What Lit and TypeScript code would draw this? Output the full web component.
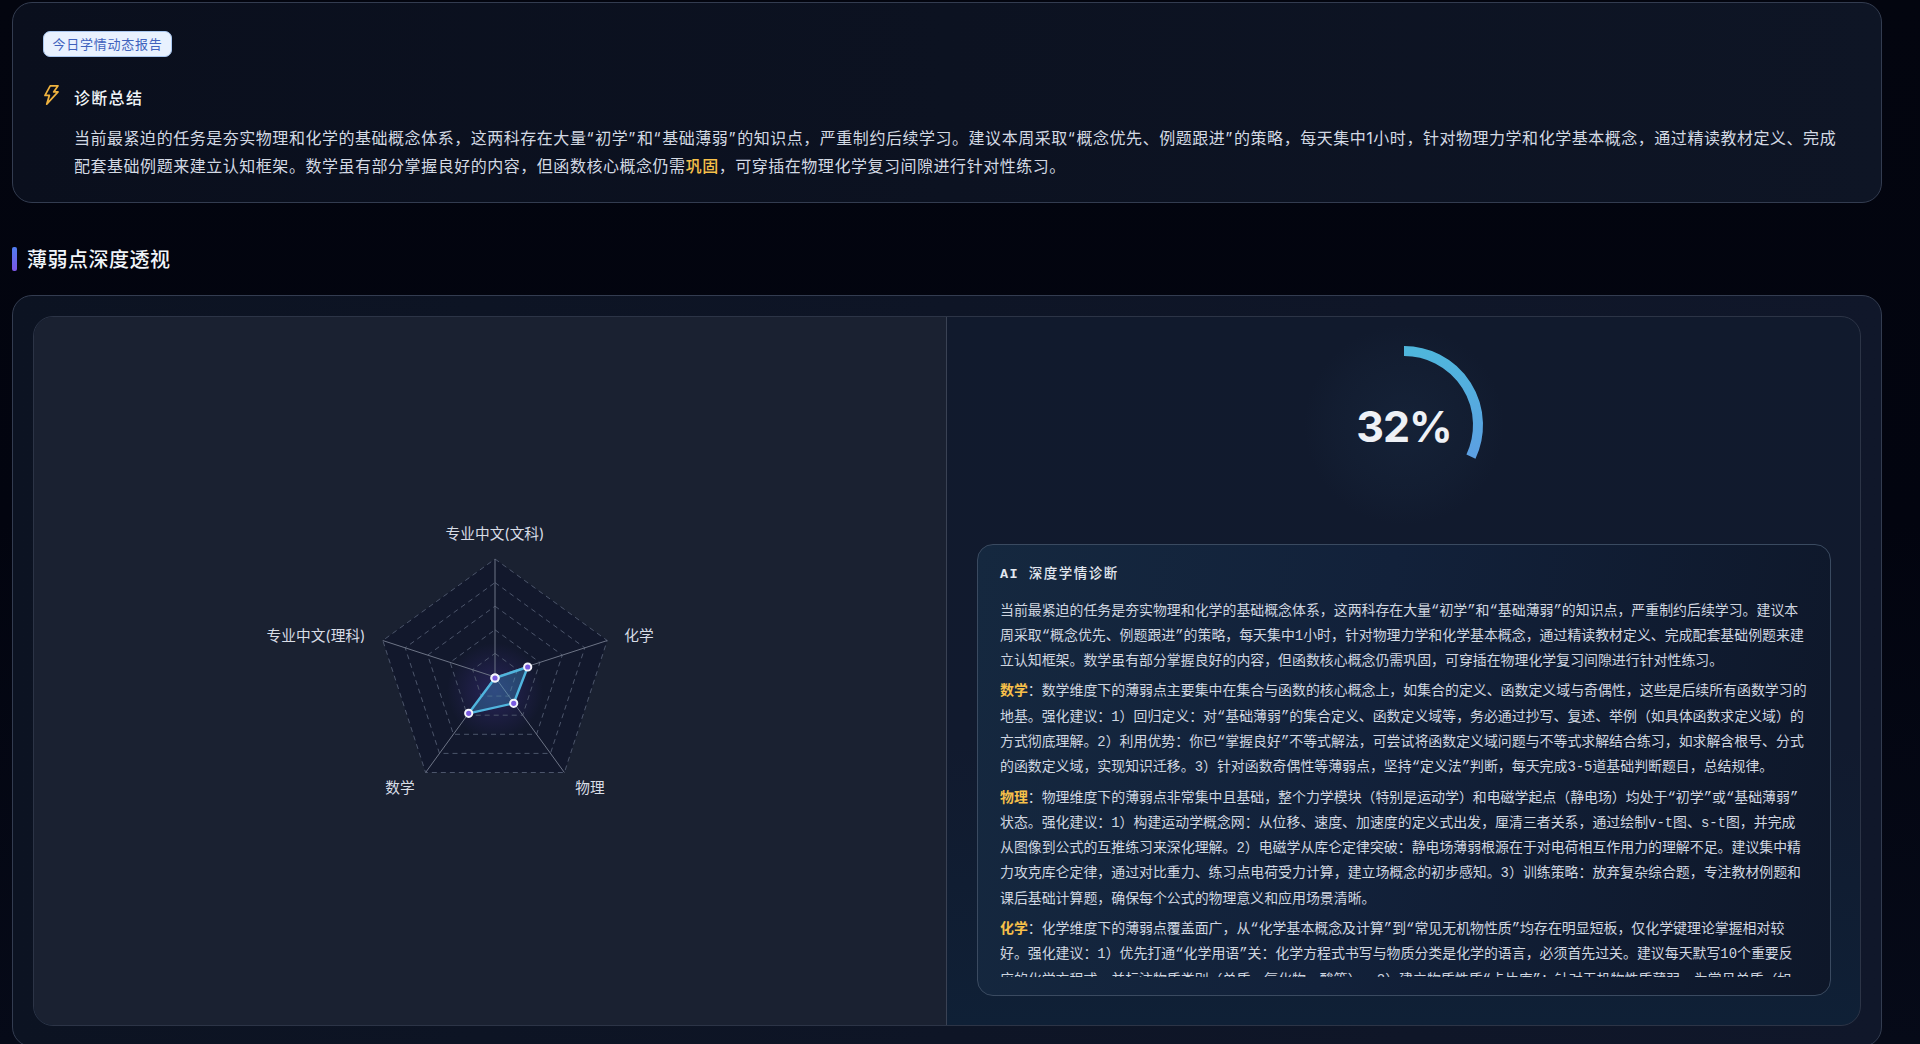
import { LitElement, html, css, svg } from "lit";
import { customElement } from "lit/decorators.js";

const SANS = `Inter, "Noto Sans CJK SC", sans-serif`;
const CX = 495;
const CY = 677;
const R = 118;
const vertex = (i: number, r: number) => {
  const a = (-90 + i * 72) * (Math.PI / 180);
  return [CX + r * Math.cos(a), CY + r * Math.sin(a)];
};
const ring = (r: number) =>
  [0, 1, 2, 3, 4].map((i) => vertex(i, r).map((n) => n.toFixed(1)).join(",")).join(" ");
const dataPts = [
  [495, 678],
  [527.7, 667],
  [513.7, 703.3],
  [468.7, 713.3],
  [495, 678],
];
const labels = [
  { t: "专业中文(文科)", x: 495, y: 534 },
  { t: "化学", x: 639, y: 636 },
  { t: "物理", x: 590, y: 788 },
  { t: "数学", x: 400, y: 788 },
  { t: "专业中文(理科)", x: 316, y: 636 },
];

const paragraphs = [
  {
    h: "",
    t: `当前最紧迫的任务是夯实物理和化学的基础概念体系，这两科存在大量“初学”和“基础薄弱”的知识点，严重制约后续学习。建议本周采取“概念优先、例题跟进”的策略，每天集中1小时，针对物理力学和化学基本概念，通过精读教材定义、完成配套基础例题来建立认知框架。数学虽有部分掌握良好的内容，但函数核心概念仍需巩固，可穿插在物理化学复习间隙进行针对性练习。`,
  },
  {
    h: "数学",
    t: `：数学维度下的薄弱点主要集中在集合与函数的核心概念上，如集合的定义、函数定义域与奇偶性，这些是后续所有函数学习的地基。强化建议：1）回归定义：对“基础薄弱”的集合定义、函数定义域等，务必通过抄写、复述、举例（如具体函数求定义域）的方式彻底理解。2）利用优势：你已“掌握良好”不等式解法，可尝试将函数定义域问题与不等式求解结合练习，如求解含根号、分式的函数定义域，实现知识迁移。3）针对函数奇偶性等薄弱点，坚持“定义法”判断，每天完成3-5道基础判断题目，总结规律。`,
  },
  {
    h: "物理",
    t: `：物理维度下的薄弱点非常集中且基础，整个力学模块（特别是运动学）和电磁学起点（静电场）均处于“初学”或“基础薄弱”\n状态。强化建议：1）构建运动学概念网：从位移、速度、加速度的定义式出发，厘清三者关系，通过绘制v-t图、s-t图，并完成从图像到公式的互推练习来深化理解。2）电磁学从库仑定律突破：静电场薄弱根源在于对电荷相互作用力的理解不足。建议集中精力攻克库仑定律，通过对比重力、练习点电荷受力计算，建立场概念的初步感知。3）训练策略：放弃复杂综合题，专注教材例题和课后基础计算题，确保每个公式的物理意义和应用场景清晰。`,
  },
  {
    h: "化学",
    t: `：化学维度下的薄弱点覆盖面广，从“化学基本概念及计算”到“常见无机物性质”均存在明显短板，仅化学键理论掌握相对较好。强化建议：1）优先打通“化学用语”关：化学方程式书写与物质分类是化学的语言，必须首先过关。建议每天默写10个重要反\n应的化学方程式，并标注物质类别（单质、氧化物、酸等）。 2）建立物质性质“卡片库”：针对无机物性质薄弱，为常见单质（如钠、铁、氯）建立性质卡片，每天复习，逐步形成知识网络。`,
  },
];

const quoted = (s: string) =>
  s.split(/([“”])/).map((part) =>
    part === "“" || part === "”" ? html`<span class="q">${part}</span>` : part
  );

@customElement("app-root")
export class AppRoot extends LitElement {
  static styles = css`
    :host {
      display: block;
      height: 1044px;
      overflow: hidden;
      box-sizing: border-box;
      padding: 2px 38px 0 12px;
      background: linear-gradient(180deg, #03050f 0%, #02040f 50%, #060a18 100%);
      font-family: Inter, "Noto Sans CJK SC", sans-serif;
      color: #e2e8f0;
    }
    .card {
      border: 1px solid #333c50;
      border-radius: 20px;
      background: linear-gradient(90deg, #0a0f1d 0%, #0e1525 100%);
    }
    .summary {
      box-sizing: border-box;
      height: 201px;
      padding: 28px 30px 0;
    }
    .badge {
      display: inline-flex;
      align-items: center;
      box-sizing: border-box;
      height: 26px;
      padding: 0 8.5px 2px;
      border: 1px solid #a9c7f0;
      border-radius: 7px;
      background: #e8f1fe;
      color: #3f62bd;
      font-size: 13px;
      letter-spacing: 0.75px;
      white-space: nowrap;
    }
    .title-row {
      display: flex;
      align-items: center;
      gap: 15px;
      margin-top: 26px;
      height: 28px;
    }
    .title-row svg {
      flex: none;
      margin-left: 1px;
      margin-top: -5px;
    }
    .title-row span {
      font-size: 16px;
      font-weight: 500;
      letter-spacing: 1.3px;
      color: #f1f5f9;
    }
    .summary p {
      margin: 13px 0 0 31px;
      font-size: 16px;
      line-height: 28px;
      letter-spacing: 0.53px;
      color: #d3d9e3;
      white-space: nowrap;
    }
    .q {
      letter-spacing: 1.7px;
    }
    .gold {
      color: #f7c04a;
      font-weight: 500;
    }
    .heading {
      display: flex;
      align-items: center;
      gap: 10px;
      height: 24px;
      margin: 44px 0 24px;
      font-size: 20px;
      font-weight: 500;
      letter-spacing: 0.5px;
      color: #f1f5f9;
    }
    .heading span {
      padding-bottom: 2px;
    }
    .heading i {
      width: 5px;
      height: 24px;
      border-radius: 2px;
      background: linear-gradient(180deg, #4f7df0, #7c55e6);
    }
    .depth {
      padding: 20px;
      background: linear-gradient(90deg, #0c1322 0%, #10172a 100%);
    }
    .panel {
      display: grid;
      grid-template-columns: 1fr 1fr;
      box-sizing: border-box;
      height: 710px;
      border: 1px solid #2c3446;
      border-radius: 20px;
      overflow: hidden;
      background: linear-gradient(180deg, #111a2d 0%, #111a2e 60%, #0f2036 100%);
    }
    .left {
      display: flex;
      align-items: center;
      justify-content: center;
      border-right: 1px solid #3a4254;
      background: #1a2131;
    }
    .right {
      display: flex;
      flex-direction: column;
      min-height: 0;
      padding: 8px 29px 29px 30px;
    }
    .gauge {
      display: block;
      flex: none;
      align-self: center;
      margin-bottom: 19px;
    }
    .ai {
      flex: 1;
      min-height: 0;
      display: flex;
      flex-direction: column;
      box-sizing: border-box;
      padding: 20px 22px 18px;
      border: 1px solid #3a4a60;
      border-radius: 16px;
      background: linear-gradient(100deg, #15283f 0%, #12213a 45%, #0e1729 100%);
    }
    .ai h3 {
      margin: 0 0 13.5px;
      font: 500 13.5px/20px "Liberation Mono", "Noto Sans CJK SC", monospace;
      letter-spacing: 1.5px;
      color: #e2e8f0;
      white-space: pre;
    }
    .ai h3 span {
      font-weight: 700;
    }
    .ai .body {
      flex: 1;
      min-height: 0;
      overflow: hidden;
    }
    .ai p {
      margin: 0 0 5px;
      font: 400 13.92px/25.3px "Liberation Mono", "Noto Sans CJK SC", monospace;
      color: #cfd6e0;
      white-space: pre-line;
    }
    .ai b {
      color: #f7c04a;
      font-weight: 700;
    }
  `;

  private radar() {
    return svg`
      <defs>
        <radialGradient id="glow" gradientUnits="userSpaceOnUse" cx="${CX}" cy="${CY + 14}" r="48">
          <stop offset="0" stop-color="#5a3fc0" stop-opacity="0.3" />
          <stop offset="1" stop-color="#5a3fc0" stop-opacity="0" />
        </radialGradient>
      </defs>
      <polygon points="${ring(R)}" fill="#12182c" />
      <polygon points="${ring(R)}" fill="url(#glow)" />
      ${[1, 2, 3, 4, 5].map(
        (k) => svg`<polygon points="${ring((R * k) / 5)}" fill="none" stroke="#4c556b" stroke-width="1" stroke-dasharray="5 4" />`
      )}
      ${[0, 1, 2, 3, 4].map((i) => {
        const [x, y] = vertex(i, R);
        return svg`<line x1="${CX}" y1="${CY}" x2="${x}" y2="${y}" stroke="#6d7486" stroke-width="1" />`;
      })}
      <polygon points="${dataPts.map((p) => p.join(",")).join(" ")}" fill="rgba(66,160,215,0.32)" stroke="#50b5de" stroke-width="2.4" stroke-linejoin="round" />
      ${dataPts.map(
        (p) => svg`<circle cx="${p[0]}" cy="${p[1]}" r="3.6" fill="#7a5be0" stroke="#f4f5fb" stroke-width="2" />`
      )}
      ${labels.map(
        (l) => svg`<text x="${l.x}" y="${l.y}" text-anchor="middle" dominant-baseline="central" font-size="14.7" fill="#d8dde6" font-family=${SANS}>${l.t}</text>`
      )}
    `;
  }

  private gauge() {
    const r = 74;
    const a = (32 / 100) * 2 * Math.PI;
    const ex = 1404 + r * Math.sin(a);
    const ey = 425 - r * Math.cos(a);
    return svg`
      <defs>
        <linearGradient id="arc" x1="0" y1="0" x2="0" y2="1">
          <stop offset="0" stop-color="#4fb6dc" />
          <stop offset="1" stop-color="#5c9fe2" />
        </linearGradient>
        <radialGradient id="halo">
          <stop offset="0" stop-color="#1b2e47" stop-opacity="0.4" />
          <stop offset="0.7" stop-color="#1b2e47" stop-opacity="0.15" />
          <stop offset="1" stop-color="#1b2e47" stop-opacity="0" />
        </radialGradient>
      </defs>
      <circle cx="1404" cy="425" r="100" fill="url(#halo)" />
      <path d="M1404 351 A${r} ${r} 0 0 1 ${ex.toFixed(2)} ${ey.toFixed(2)}" fill="none" stroke="url(#arc)" stroke-width="10" />
      <text x="1404" y="426" text-anchor="middle" dominant-baseline="central" font-size="43" font-weight="700" letter-spacing="-1" fill="#eef1f6" font-family="Inter, sans-serif">32%</text>
    `;
  }

  render() {
    return html`
      <section class="card summary">
        <div class="badge">今日学情动态报告</div>
        <div class="title-row">
          <svg width="15" height="20" viewBox="4 1 17 23" fill="none" stroke="#eeb23f" stroke-width="2" stroke-linejoin="round" stroke-linecap="round">
            <path d="M11 2h9l-5 7h5L7 23l3-10H5z" />
          </svg>
          <span>诊断总结</span>
        </div>
        <p>${quoted("当前最紧迫的任务是夯实物理和化学的基础概念体系，这两科存在大量“初学”和“基础薄弱”的知识点，严重制约后续学习。建议本周采取“概念优先、例题跟进”的策略，每天集中1小时，针对物理力学和化学基本概念，通过精读教材定义、完成")}<br />配套基础例题来建立认知框架。数学虽有部分掌握良好的内容，但函数核心概念仍需<span class="gold">巩固</span>，可穿插在物理化学复习间隙进行针对性练习。</p>
      </section>
      <h2 class="heading"><i></i><span>薄弱点深度透视</span></h2>
      <section class="card depth">
        <div class="panel">
          <div class="left">
            <svg width="560" height="340" viewBox="210 501 560 340">${this.radar()}</svg>
          </div>
          <div class="right">
            <svg class="gauge" width="200" height="200" viewBox="1304 325 200 200">${this.gauge()}</svg>
            <div class="ai">
              <h3><span>AI</span> 深度学情诊断</h3>
              <div class="body">
                ${paragraphs.map(
                  (p) => html`<p>${p.h ? html`<b>${p.h}</b>` : ""}${p.t}</p>`
                )}
              </div>
            </div>
          </div>
        </div>
      </section>
    `;
  }
}
